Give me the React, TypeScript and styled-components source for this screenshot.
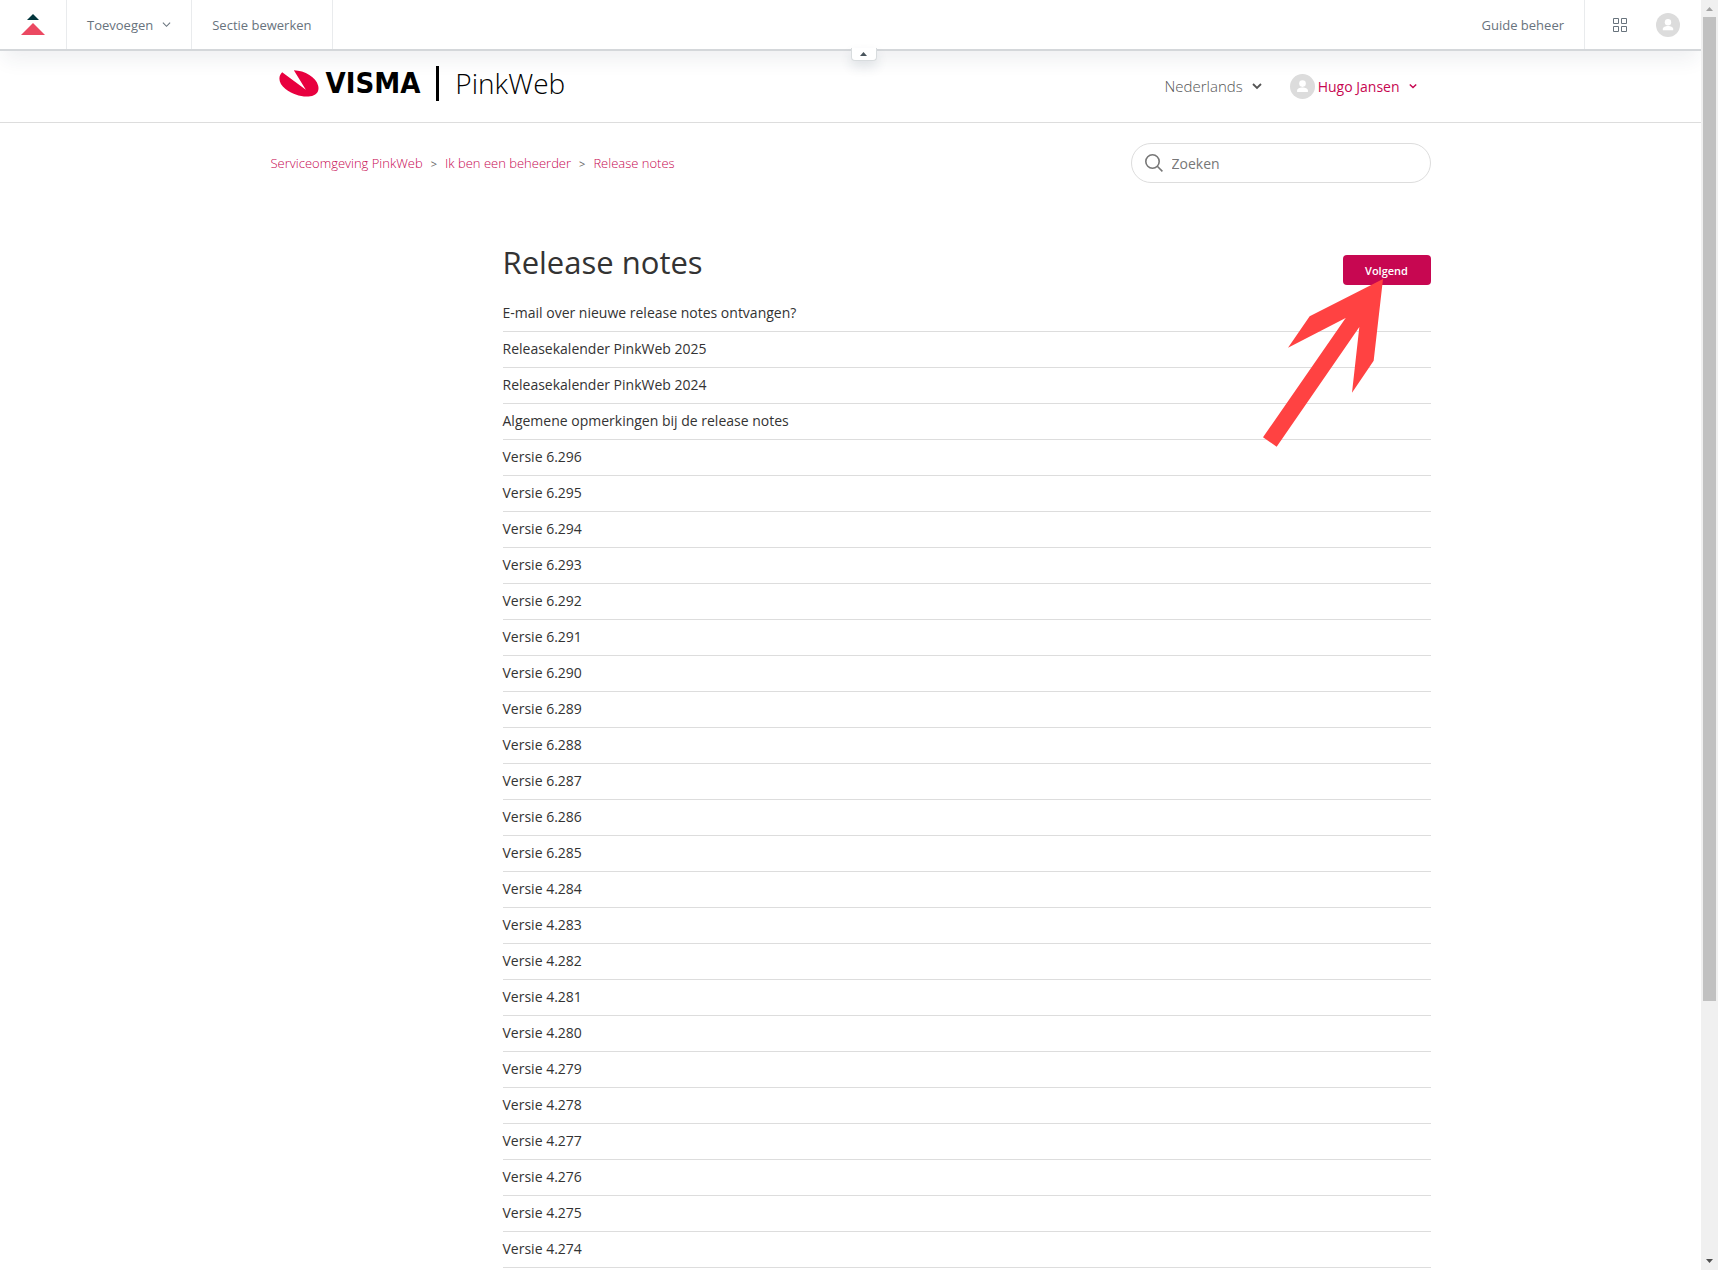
import React from "react";
import styled, { createGlobalStyle } from "styled-components";

const sans = `"Open Sans", "Noto Sans", sans-serif`;

const GlobalStyle = createGlobalStyle`
  *, *::before, *::after { box-sizing: border-box; }
  body { margin: 0; background: #fff; color: #333; font-family: ${sans}; font-size: 14px; }
  button, input { font: inherit; color: inherit; }
  a { color: inherit; text-decoration: none; }
  h1, ul, ol { margin: 0; padding: 0; }
  svg { display: block; flex: none; }
`;

const Shell = styled.div`
  display: flex;
  height: 100vh;
`;

const Page = styled.div`
  flex: 1;
  min-width: 0;
  overflow-y: auto;
  scrollbar-width: none;
`;

const AdminBar = styled.nav`
  position: relative;
  z-index: 2;
  display: flex;
  height: 51px;
  background: #fff;
  border-bottom: 2px solid #d4d7da;
  box-shadow: 0 12px 20px -4px rgba(35, 55, 80, 0.08);
  color: #68737d;
  font-size: 13px;
`;

const BarItem = styled.button`
  display: flex;
  align-items: center;
  gap: 9px;
  padding: 0 20px;
  border: 0 solid #e9ebed;
  border-right-width: 1px;
  background: none;
`;

const LogoItem = styled.a`
  display: flex;
  align-items: center;
  padding: 0 21px;
  border-right: 1px solid #e9ebed;
`;

const Spacer = styled.div`
  flex: 1;
`;

const BarIcons = styled.div`
  display: flex;
  align-items: center;
  gap: 28px;
  padding: 0 21px 0 28px;
`;

const IconButton = styled.button`
  display: flex;
  padding: 0;
  border: 0;
  background: none;
`;

const CollapseTab = styled.button`
  position: absolute;
  top: 48px;
  left: 50%;
  display: flex;
  justify-content: center;
  align-items: center;
  width: 26px;
  height: 13px;
  padding: 0;
  background: #fff;
  border: 1px solid #d8dcde;
  border-top: 0;
  border-radius: 0 0 4px 4px;
  box-shadow: 0 6px 12px rgba(35, 55, 80, 0.12);
`;

const Header = styled.header`
  border-bottom: 1px solid #ddd;
`;

const Container = styled.div`
  width: 100%;
  max-width: 1160px;
  margin: 0 auto;
`;

const HeaderRow = styled(Container)`
  display: flex;
  justify-content: space-between;
  height: 71px;
  padding: 0 14px 0 7px;
`;

const Brand = styled.a`
  display: flex;
  align-items: center;
  height: 64px;
  color: #000;
`;

const VismaWord = styled.span`
  margin-left: 7px;
  font: bold 29px/36px "DejaVu Sans Condensed", sans-serif;
`;

const BrandRule = styled.span`
  width: 3px;
  height: 35px;
  margin: 0 16px;
  background: #000;
`;

const ProductWord = styled.span`
  font: 300 28px/36px "Open Sans", sans-serif;
`;

const UserNav = styled.div`
  display: flex;
  align-items: center;
  gap: 28px;
  height: 70px;
`;

const MenuButton = styled.button<{ $accent?: boolean }>`
  display: flex;
  align-items: center;
  gap: 9px;
  padding: 0;
  border: 0;
  background: none;
  color: ${(p) => (p.$accent ? "#c70751" : "#555")};
  font-weight: ${(p) => (p.$accent ? 400 : 300)};
  font-size: ${(p) => (p.$accent ? 14 : 15)}px;
`;

const Person = styled.span`
  display: flex;
  align-items: center;
  gap: 3px;
`;

const SubNav = styled(Container)`
  display: flex;
  align-items: center;
  justify-content: space-between;
  padding: 20px 0;
`;

const Crumbs = styled.ol`
  display: flex;
  list-style: none;
  font-size: 13px;
  font-weight: 300;
  color: #c70751;
  li + li::before {
    content: ">";
    margin: 0 8px;
    color: #666;
    font-size: 11px;
    font-weight: 400;
  }
`;

const Search = styled.label`
  display: flex;
  align-items: center;
  gap: 9px;
  width: 300px;
  height: 40px;
  padding: 0 13px;
  border: 1px solid #ddd;
  border-radius: 20px;
  color: #777;
`;

const SearchInput = styled.input`
  flex: 1;
  min-width: 0;
  padding: 0;
  border: 0;
  outline: 0;
  background: none;
  font-size: 14px;
  &::placeholder { color: #777; opacity: 1; }
`;

const Section = styled(Container)`
  display: flex;
  justify-content: flex-end;
`;

const Main = styled.main`
  position: relative;
  width: 80%;
  padding-top: 32px;
`;

const TitleRow = styled.div`
  display: flex;
  justify-content: space-between;
  align-items: flex-start;
  height: 61px;
`;

const Title = styled.h1`
  font-size: 31px;
  line-height: 54px;
  font-weight: 400;
`;

const Follow = styled.button`
  width: 88px;
  height: 30px;
  margin-top: 20px;
  padding: 0;
  border: 0;
  border-radius: 4px;
  background: #c70751;
  color: #fff;
  font-size: 11px;
  font-weight: 600;
`;

const Articles = styled.ul`
  list-style: none;
`;

const Article = styled.li`
  height: 36px;
  border-bottom: 1px solid #ddd;
  line-height: 34px;
`;

const PointerArrow = styled.svg`
  position: absolute;
  top: 76px;
  right: 48px;
  pointer-events: none;
`;

const ScrollTrack = styled.div`
  display: flex;
  flex-direction: column;
  align-items: center;
  width: 17px;
  padding: 7px 0;
  background: #f0f0f0;
`;

const ScrollThumb = styled.div`
  width: 13px;
  height: 984px;
  margin: 6px 0 auto;
  background: #c1c1c1;
`;

const Chevron = ({ size, weight }: { size: number; weight: number }) => (
  <svg width={size} height={size} viewBox="0 0 10 10" fill="none" stroke="currentColor" strokeWidth={weight}>
    <path d="M1 3l4 4 4-4" />
  </svg>
);

const Avatar = ({ size }: { size: number }) => (
  <svg width={size} height={size} viewBox="0 0 24 24">
    <circle cx="12" cy="12" r="12" fill="#dcdcdc" />
    <circle cx="12" cy="9.2" r="3.2" fill="#fff" />
    <path d="M6.8 17.2v-1.4c0-1.8 2.6-2.9 5.2-2.9s5.2 1.1 5.2 2.9v1.4z" fill="#fff" />
  </svg>
);

const range = (major: number, from: number, to: number) =>
  Array.from({ length: from - to + 1 }, (_, i) => `Versie ${major}.${from - i}`);

const articles = [
  "E-mail over nieuwe release notes ontvangen?",
  "Releasekalender PinkWeb 2025",
  "Releasekalender PinkWeb 2024",
  "Algemene opmerkingen bij de release notes",
  ...range(6, 296, 285),
  ...range(4, 284, 274),
];

export default function App() {
  return (
    <Shell>
      <GlobalStyle />
      <Page>
        <AdminBar>
          <LogoItem href="#" aria-label="Guide">
            <svg width="24" height="21" viewBox="0 0 24 21">
              <path d="M12 0l6 6H6z" fill="#03363d" />
              <path d="M12 9l12 12H0z" fill="#eb4962" />
            </svg>
          </LogoItem>
          <BarItem>
            Toevoegen
            <Chevron size={9} weight={1.2} />
          </BarItem>
          <BarItem>Sectie bewerken</BarItem>
          <Spacer />
          <BarItem>Guide beheer</BarItem>
          <BarIcons>
            <IconButton aria-label="Producten">
              <svg width="15" height="15" viewBox="0 0 15 15" fill="none" stroke="#68737d">
                <path d="M.5 1.500h5v5h-5zM8.500 1.500h5v5h-5zM.5 9.500h5v5h-5zM8.500 9.500h5v5h-5z" />
              </svg>
            </IconButton>
            <IconButton aria-label="Profiel">
              <Avatar size={24} />
            </IconButton>
          </BarIcons>
          <CollapseTab aria-label="Inklappen">
            <svg width="7" height="4" viewBox="0 0 7 4">
              <path d="M3.500 0L7 4H0z" fill="#49545c" />
            </svg>
          </CollapseTab>
        </AdminBar>

        <Header>
          <HeaderRow>
            <Brand href="#">
              <svg width="41" height="28" viewBox="0 0 122 84">
                <path
                  d="M12 10C-2 24 2 44 22 60C44 77 72 85 96 82C116 79 124 66 120 50C114 25 80 5 47 4L83 62Z"
                  fill="#e8003f"
                />
              </svg>
              <VismaWord>VISMA</VismaWord>
              <BrandRule />
              <ProductWord>PinkWeb</ProductWord>
            </Brand>
            <UserNav>
              <MenuButton>
                Nederlands
                <Chevron size={10} weight={1.8} />
              </MenuButton>
              <MenuButton $accent>
                <Person>
                  <Avatar size={25} />
                  Hugo Jansen
                </Person>
                <Chevron size={8} weight={1.8} />
              </MenuButton>
            </UserNav>
          </HeaderRow>
        </Header>

        <SubNav>
          <Crumbs>
            <li><a href="#">Serviceomgeving PinkWeb</a></li>
            <li><a href="#">Ik ben een beheerder</a></li>
            <li><a href="#">Release notes</a></li>
          </Crumbs>
          <Search>
            <svg width="18" height="18" viewBox="0 0 18 18" fill="none" stroke="currentColor" strokeWidth="1.6">
              <circle cx="7.500" cy="7.500" r="6.700" />
              <path d="M12.300 12.300L17.400 17.400" />
            </svg>
            <SearchInput type="search" placeholder="Zoeken" aria-label="Zoeken" />
          </Search>
        </SubNav>

        <Section>
          <Main>
            <TitleRow>
              <Title>Release notes</Title>
              <Follow>Volgend</Follow>
            </TitleRow>
            <Articles>
              {articles.map((name) => (
                <Article key={name}><a href="#">{name}</a></Article>
              ))}
            </Articles>
            <PointerArrow width="120" height="168" viewBox="0 0 360 504">
              <path d="M360 0L332 245L267 341L289 144L41 503L0 475L248 117L75 206L140 112Z" fill="#ff4242" />
            </PointerArrow>
          </Main>
        </Section>
      </Page>
      <ScrollTrack aria-hidden="true">
        <svg width="7" height="4" viewBox="0 0 7 4"><path d="M3.500 0L7 4H0z" fill="#a3a3a3" /></svg>
        <ScrollThumb />
        <svg width="7" height="4" viewBox="0 0 7 4"><path d="M3.500 4L7 0H0z" fill="#505050" /></svg>
      </ScrollTrack>
    </Shell>
  );
}
